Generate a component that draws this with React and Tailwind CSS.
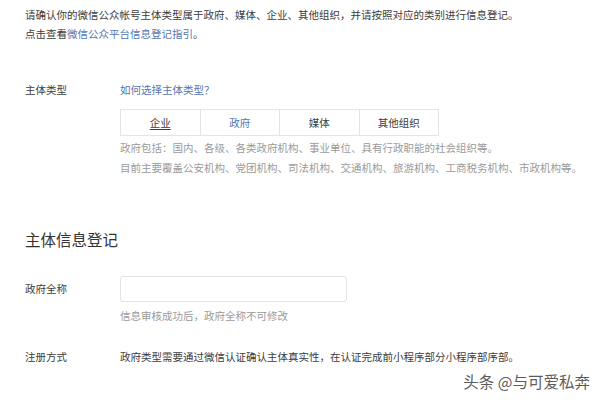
const tabs = ['企业', '政府', '媒体', '其他组织'];

export default function App() {
  const active = '政府';

  return (
    <div
      className="relative w-[600px] h-[400px] overflow-hidden bg-white text-[#3c3c3c]"
      style={{ fontFamily: '"Noto Sans CJK SC", "Noto Sans", sans-serif' }}
    >
      <div className="pl-[25px] pt-[5px] text-[10.5px]">
        <p className="leading-[19px] whitespace-nowrap">
          请确认你的微信公众帐号主体类型属于政府、媒体、企业、其他组织，并请按照对应的类别进行信息登记。
        </p>
        <p className="leading-[19px]">
          点击查看<span className="text-[#5475b2]">微信公众平台信息登记指引</span>。
        </p>
      </div>

      <div className="mt-[37px] flex pl-[25px] text-[10.5px]">
        <div className="w-[95px] leading-[19px]">主体类型</div>
        <div className="flex flex-col">
          <p className="leading-[19px] text-[#5475b2]">如何选择主体类型？</p>
          <div className="mt-[10px] flex w-[319px] h-[27px] border border-[#e4e4e4]">
            {tabs.map((t, i) => (
              <div
                key={t}
                className={`flex-1 flex items-center justify-center ${
                  i > 0 ? 'border-l border-[#e4e4e4]' : ''
                } ${t === active ? 'text-[#5475b2]' : ''}`}
              >
                <span className={i === 0 ? 'underline underline-offset-2' : ''}>{t}</span>
              </div>
            ))}
          </div>
          <div className="mt-[2px] text-[#9a9a9a] leading-[20px] whitespace-nowrap">
            <p>政府包括：国内、各级、各类政府机构、事业单位、具有行政职能的社会组织等。</p>
            <p>目前主要覆盖公安机构、党团机构、司法机构、交通机构、旅游机构、工商税务机构、市政机构等。</p>
          </div>
        </div>
      </div>

      <h2 className="mt-[49px] pl-[25px] text-[15.5px] leading-[24px] text-[#333]">
        主体信息登记
      </h2>

      <div className="mt-[25px] flex items-center pl-[25px] text-[10.5px]">
        <div className="w-[95px]">政府全称</div>
        <div className="w-[227px] h-[26px] rounded-[3px] border border-[#e3e3e3] bg-white"></div>
      </div>
      <p className="mt-[4px] pl-[120px] text-[10.5px] leading-[19px] text-[#9a9a9a]">
        信息审核成功后，政府全称不可修改
      </p>

      <div className="mt-[22px] flex pl-[25px] text-[10.5px] leading-[19px]">
        <div className="w-[95px]">注册方式</div>
        <p className="whitespace-nowrap">
          政府类型需要通过微信认证确认主体真实性，在认证完成前小程序部分小程序部序部。
        </p>
      </div>

      <div
        className="absolute right-[10px] bottom-[9px] text-[15.5px] leading-[20px] text-[#5c5c5c]"
        style={{ textShadow: '0 0 2px #fff, 0 0 2px #fff' }}
      >
        头条 @与可爱私奔
      </div>
    </div>
  );
}
